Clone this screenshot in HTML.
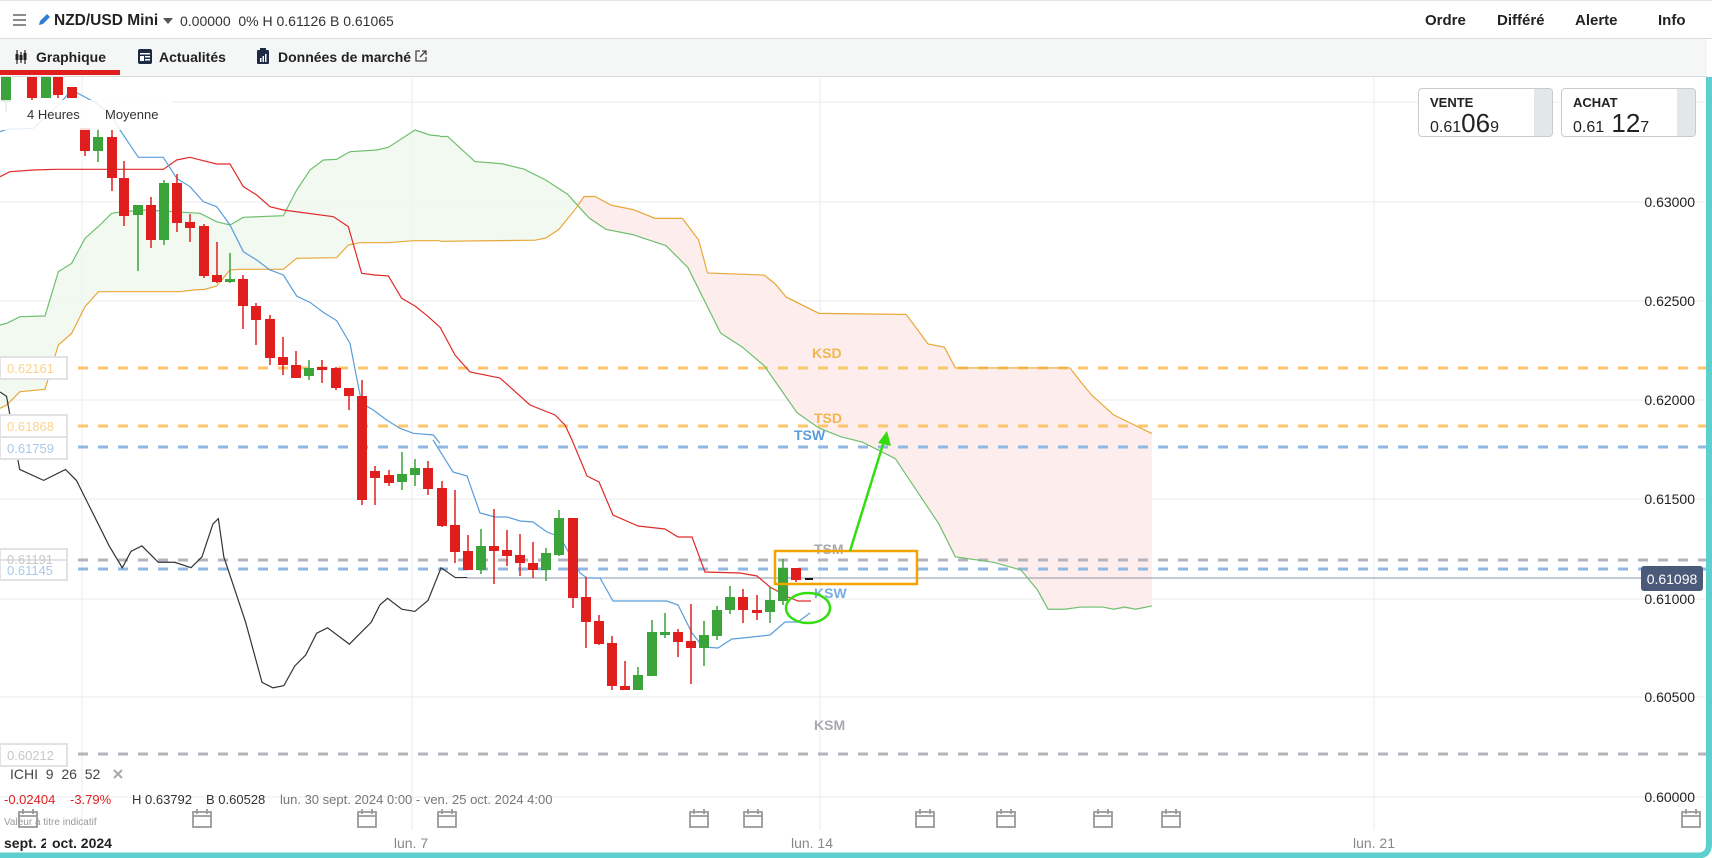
<!DOCTYPE html>
<html><head><meta charset="utf-8">
<style>
*{margin:0;padding:0;box-sizing:border-box}
body{width:1712px;height:858px;overflow:hidden;background:#fff;font-family:"Liberation Sans",sans-serif;position:relative}
.top{position:absolute;left:0;top:0;width:1712px;height:39px;background:#fff;border-bottom:1px solid #d8dcdc;border-top:1px solid #e4e6e6}
.tabs{position:absolute;left:0;top:39px;width:1707px;height:38px;background:#f5f6f6;border-bottom:1px solid #d8dcdc}
.t{position:absolute;white-space:nowrap}
</style></head><body>
<div class="top">
 <svg class="t" style="left:13px;top:12px" width="14" height="14"><path d="M0 2h13M0 7h13M0 12h13" stroke="#666" stroke-width="1.6"/></svg>
 <svg class="t" style="left:37px;top:12px" width="14" height="14"><path d="M2 12l1-4 7-7 3 3-7 7z" fill="#2f7fd8"/></svg>
 <div class="t" style="left:54px;top:11px;font-size:15.5px;font-weight:bold;color:#222">NZD/USD Mini</div>
 <svg class="t" style="left:163px;top:17px" width="10" height="6"><path d="M0 0h10L5 6z" fill="#555"/></svg>
 <div class="t" style="left:180px;top:12px;font-size:14px;color:#333">0.00000&nbsp; 0% H 0.61126 B 0.61065</div>
 <div class="t" style="left:1425px;top:11px;font-size:15px;font-weight:bold;color:#222">Ordre</div>
 <div class="t" style="left:1497px;top:11px;font-size:15px;font-weight:bold;color:#222">Différé</div>
 <div class="t" style="left:1575px;top:11px;font-size:15px;font-weight:bold;color:#222">Alerte</div>
 <div class="t" style="left:1658px;top:11px;font-size:15px;font-weight:bold;color:#222">Info</div>
</div>
<div class="tabs">
 <svg class="t" style="left:15px;top:11px" width="12" height="14"><path d="M2 0v14M6 2v11M10 0v14" stroke="#222" stroke-width="1.2"/><rect x="0.5" y="4" width="3" height="6" fill="#222"/><rect x="4.5" y="5" width="3" height="5" fill="#222"/><rect x="8.5" y="3" width="3" height="7" fill="#222"/></svg>
 <div class="t" style="left:36px;top:10px;font-size:14px;font-weight:bold;color:#222">Graphique</div>
 <div class="t" style="left:0;top:31px;width:120px;height:5px;background:#e01e1e"></div>
 <svg class="t" style="left:138px;top:10px" width="14" height="15"><rect width="14" height="15" rx="2" fill="#1d2a44"/><rect x="2" y="4" width="10" height="1.5" fill="#fff"/><rect x="2" y="7" width="4" height="5" fill="#fff"/><rect x="7" y="7" width="5" height="1.5" fill="#fff"/><rect x="7" y="10" width="5" height="1.5" fill="#fff"/></svg>
 <div class="t" style="left:159px;top:10px;font-size:14px;font-weight:bold;color:#222">Actualités</div>
 <svg class="t" style="left:257px;top:9px" width="12" height="16"><rect y="2" width="12" height="14" rx="1" fill="#1d2a44"/><rect x="3" y="0" width="6" height="4" fill="#1d2a44"/><rect x="3" y="10" width="1.5" height="4" fill="#fff"/><rect x="5.5" y="8" width="1.5" height="6" fill="#fff"/><rect x="8" y="6" width="1.5" height="8" fill="#fff"/></svg>
 <div class="t" style="left:278px;top:10px;font-size:14px;font-weight:bold;color:#222">Données de marché</div>
 <svg class="t" style="left:415px;top:11px" width="12" height="12"><path d="M5 1H1v10h10V7M7 1h4v4M11 1L5 7" fill="none" stroke="#444" stroke-width="1.3"/></svg>
</div>

<svg class="t" style="left:0;top:77px" width="1712" height="781" viewBox="0 77 1712 781">
<defs><g id="cal"><rect x="-9" y="812" width="18" height="15"/><path d="M-9 816H9M-5 809v5M5 809v5"/></g></defs>
<g stroke="#ebebeb" stroke-width="1">
<path d="M0 102H1705M0 202H1705M0 301H1705M0 400H1705M0 499H1705M0 599H1705M0 697H1705M0 797H1705"/>
<path d="M82 77V830M412 77V830M820 77V830M1374 77V830"/>
</g>
<g transform="translate(0,70) scale(0.33333)">
<polygon fill="#eef7ee" opacity="0.8" points="0,765 20,760 60,740 135,738 175,605 215,580 255,505 300,465 335,430 370,425 440,420 600,430 650,455 690,465 730,442 850,437 890,360 930,300 970,270 1010,268 1050,245 1130,240 1165,232 1245,180 1290,195 1320,198 1320,512 1240,512 1165,518 1080,518 1045,525 1010,563 890,565 850,598 720,598 690,600 650,648 615,658 580,660 540,665 295,665 255,710 215,790 175,825 135,958 60,965 20,1005 0,1015"/>
</g>
<g transform="scale(1.0918)">
<polygon fill="#eef7ee" opacity="0.8" points="403,125 410,125 435,148 460,150 480,155 500,165 520,178 528,187 512,210 500,218 490,220 403,221"/>
<polygon fill="#fdeaea" opacity="0.85" points="528,187 535,180 545,180 560,188 580,192 600,200 625,200 640,220 648,250 700,252 710,260 720,272 750,287 830,288 850,315 865,318 875,337 980,337 990,350 1000,362 1020,380 1055,397 1055,555 1040,558 1020,558 1010,556 990,556 975,558 960,558 950,540 935,522 910,515 875,510 860,480 840,450 820,420 790,405 770,400 750,392 730,378 700,335 680,318 660,305 650,285 640,265 630,245 610,225 580,215 555,210 540,200"/>
</g>
<g stroke-width="3" stroke-dasharray="10 10" fill="none">
<path d="M78 368H1707" stroke="#fcc66a"/>
<path d="M78 426H1707" stroke="#fcc66a"/>
<path d="M78 447H1707" stroke="#8fb8e2"/>
<path d="M78 560H1707" stroke="#b4b4bc"/>
<path d="M78 569H1707" stroke="#8fb8e2"/>
<path d="M78 754H1707" stroke="#b4b4bc"/>
</g>
<path d="M467 578H1641" stroke="#8a96a8" stroke-width="1"/>
<g transform="translate(0,70) scale(0.33333)" fill="none">
<polyline vector-effect="non-scaling-stroke" stroke-width="1.2" stroke="#6fbf6f" points="0,765 20,760 60,740 135,738 175,605 215,580 255,505 300,465 335,430 370,425 440,420 600,430 650,455 690,465 730,442 850,437 890,360 930,300 970,270 1010,268 1050,245 1130,240 1165,232 1245,180 1290,195 1320,198"/>
<polyline vector-effect="non-scaling-stroke" stroke-width="1.2" stroke="#e8a838" points="0,1015 20,1005 60,965 135,958 175,825 215,790 255,710 295,665 540,665 580,660 615,658 650,648 690,600 720,598 850,598 890,565 1010,563 1045,525 1080,518 1165,518 1240,512 1320,512"/>
<polyline vector-effect="non-scaling-stroke" stroke-width="1.2" stroke="#e02a2a" points="0,320 30,305 100,300 170,298 490,298 530,270 570,262 610,272 650,282 690,282 730,350 770,375 810,410 850,420 1000,440 1045,470 1085,610 1125,615 1165,618 1205,685 1245,708 1285,740 1320,772"/>
<polyline vector-effect="non-scaling-stroke" stroke-width="1.2" stroke="#5a9ddb" points="0,185 20,178 100,175 180,100 215,60 285,97 330,130 360,180 415,262 490,262 530,325 570,350 610,395 650,410 690,465 730,545 770,570 810,600 850,615 890,678 930,697 970,727 1010,752 1050,820 1085,1000 1120,1020 1160,1050 1200,1075 1240,1090 1300,1095 1320,1120"/>
</g>
<g transform="scale(1.0918)" fill="none">
<polyline vector-effect="non-scaling-stroke" stroke-width="1.2" stroke="#6fbf6f" points="403,125 410,125 435,148 460,150 480,155 500,165 520,178 528,187 540,200 555,210 580,215 610,225 630,245 640,265 650,285 660,305 680,318 700,335 730,378 750,392 770,400 790,405 820,420 840,450 860,480 875,510 910,515 935,522 950,540 960,558 975,558 990,556 1010,556 1020,558 1030,556 1040,558 1055,555"/>
<polyline vector-effect="non-scaling-stroke" stroke-width="1.2" stroke="#e8a838" points="403,221 490,220 500,218 512,210 525,194 528,190 535,180 545,180 560,188 580,192 600,200 625,200 640,220 648,250 700,252 710,260 720,272 750,287 830,288 850,315 865,318 875,337 980,337 990,350 1000,362 1020,380 1055,397"/>
<polyline vector-effect="non-scaling-stroke" stroke-width="1.2" stroke="#333" points="0,359 6,363 18,430 40,440 60,430 70,440 80,460 90,480 100,500 112,520 120,505 130,500 145,515 160,515 175,520 185,510 195,480 200,475 205,510 215,540 225,570 240,625 250,630 260,628 270,610 280,600 290,580 300,575 320,590 340,570 348,554 355,548 368,558 380,560 392,550 404,520 417,529 428,529"/>
</g>
<polyline fill="none" stroke="#e02a2a" stroke-width="1.2" points="440,327 455,355 470,372 500,378 530,405 555,415 565,425 572,440 587,476 599,482 613,515 638,526 665,529 678,537 692,537 705,572 740,573 757,576 770,587 788,597 798,601 811,601"/>
<polyline fill="none" stroke="#5a9ddb" stroke-width="1.2" points="433,440 453,472 467,476 480,513 495,517 507,517 520,521 533,522 547,532 560,537 573,560 580,573 587,578 600,578 613,601 667,601 678,605 692,633 703,647 718,648 732,639 743,638 770,635 785,622 798,622 810,613"/>
<g>
<g stroke-width="1.5">
<path stroke="#3aa33a" d="M6 77V112M46 77V98M98 128V162M138 205V271M164 180V245M230 253V283M309 360V380M402 452V490M415 459V486M481 529V574M546 548V581M559 510V556M638 667V690M652 620V676M665 613V638M704 621V666M717 606V640M730 586V614M770 587V623M783 559V605"/>
<path stroke="#e01e1e" d="M32 77V100M58 77V98M85 128V156M112 130V191M124 161V226M151 197V248M177 174V232M190 214V242M204 224V278M217 242V283M243 275V329M256 303V345M270 315V365M283 337V375M296 351V378M322 360V383M336 367V390M349 388V410M362 380V505M375 466V505M389 470V486M428 461V495M442 481V527M455 490V563M468 535V570M494 509V584M507 530V566M520 534V576M533 542V578M573 518V608M586 577V648M599 615V645M612 636V690M625 661V690M678 629V657M691 604V684M743 589V623M757 595V620M796 568V582"/>
</g>
<g fill="#3aa33a">
<rect x="1" y="77" width="10" height="25"/><rect x="41" y="77" width="10" height="21"/><rect x="93" y="137" width="10" height="14"/><rect x="133" y="205" width="10" height="10"/><rect x="159" y="183" width="10" height="57"/><rect x="225" y="279" width="10" height="3"/><rect x="304" y="368" width="10" height="8"/><rect x="397" y="474" width="10" height="8"/><rect x="410" y="468" width="10" height="7"/><rect x="476" y="546" width="10" height="24"/><rect x="541" y="553" width="10" height="17"/><rect x="554" y="518" width="10" height="37"/><rect x="633" y="675" width="10" height="15"/><rect x="647" y="632" width="10" height="44"/><rect x="660" y="632" width="10" height="3"/><rect x="699" y="635" width="10" height="13"/><rect x="712" y="610" width="10" height="26"/><rect x="725" y="597" width="10" height="13"/><rect x="765" y="600" width="10" height="12"/><rect x="778" y="568" width="10" height="33"/>
</g>
<g fill="#e01e1e">
<rect x="27" y="77" width="10" height="21"/><rect x="53" y="77" width="10" height="18"/><rect x="67" y="87" width="10" height="11"/><rect x="80" y="128" width="10" height="23"/><rect x="107" y="137" width="10" height="41"/><rect x="119" y="178" width="10" height="38"/><rect x="146" y="205" width="10" height="35"/><rect x="172" y="183" width="10" height="40"/><rect x="185" y="222" width="10" height="6"/><rect x="199" y="226" width="10" height="50"/><rect x="212" y="275" width="10" height="7"/><rect x="238" y="279" width="10" height="27"/><rect x="251" y="306" width="10" height="14"/><rect x="265" y="319" width="10" height="39"/><rect x="278" y="357" width="10" height="8"/><rect x="291" y="365" width="10" height="13"/><rect x="317" y="367" width="10" height="3"/><rect x="331" y="368" width="10" height="20"/><rect x="344" y="388" width="10" height="8"/><rect x="357" y="396" width="10" height="104"/><rect x="370" y="471" width="10" height="7"/><rect x="384" y="475" width="10" height="8"/><rect x="423" y="468" width="10" height="21"/><rect x="437" y="488" width="10" height="38"/><rect x="450" y="525" width="10" height="27"/><rect x="463" y="551" width="10" height="19"/><rect x="489" y="546" width="10" height="5"/><rect x="502" y="550" width="10" height="6"/><rect x="515" y="555" width="10" height="8"/><rect x="528" y="563" width="10" height="7"/><rect x="568" y="518" width="10" height="80"/><rect x="581" y="597" width="10" height="25"/><rect x="594" y="621" width="10" height="23"/><rect x="607" y="643" width="10" height="43"/><rect x="620" y="686" width="10" height="4"/><rect x="673" y="632" width="10" height="10"/><rect x="686" y="641" width="10" height="7"/><rect x="738" y="597" width="10" height="13"/><rect x="752" y="610" width="10" height="3"/><rect x="791" y="568" width="10" height="12"/>
</g>
<path d="M805 579H813" stroke="#111" stroke-width="2"/>
</g>
<rect x="0" y="100" width="172" height="30" fill="#fff" opacity="0.85"/>
<text x="27" y="119" font-size="13" fill="#333">4 Heures</text>
<text x="105" y="119" font-size="13" fill="#333">Moyenne</text>
<g font-size="14" font-weight="bold">
<text x="812" y="358" fill="#f3b54d">KSD</text>
<text x="814" y="423" fill="#f3b54d">TSD</text>
<text x="794" y="440" fill="#5a9ddb">TSW</text>
<text x="814" y="554" fill="#a8a8b0">TSM</text>
<text x="814" y="598" fill="#7aade0">KSW</text>
<text x="814" y="730" fill="#a8a8b0">KSM</text>
</g>
<rect x="775" y="551" width="142" height="33" fill="none" stroke="#f5a300" stroke-width="2.5"/>
<ellipse cx="808" cy="608" rx="22" ry="15" fill="none" stroke="#33dd11" stroke-width="2.5"/>
<path d="M850 551L885 438" stroke="#33dd11" stroke-width="2.5"/>
<path d="M887 431L878 443L891 446Z" fill="#33dd11"/>
<g stroke-width="2" fill="#fff">
<rect x="0" y="357" width="67" height="22" stroke="#e2e2e6"/>
<rect x="0" y="415" width="67" height="22" stroke="#e2e2e6"/>
<rect x="0" y="437" width="67" height="22" stroke="#e2e2e6"/>
<rect x="0" y="549" width="67" height="20" stroke="#e2e2e6"/>
<rect x="0" y="560" width="67" height="20" stroke="#e2e2e6"/>
<rect x="0" y="744" width="67" height="22" stroke="#e2e2e6"/>
</g>
<g font-size="13">
<text x="7" y="373" fill="#fbd28e">0.62161</text>
<text x="7" y="431" fill="#fbd28e">0.61868</text>
<text x="7" y="453" fill="#a9c8ea">0.61759</text>
<text x="7" y="564" fill="#c8c8cc">0.61191</text>
<text x="7" y="575" fill="#a9c8ea">0.61145</text>
<text x="7" y="760" fill="#c8c8cc">0.60212</text>
</g>
<g font-size="14" fill="#222" text-anchor="end">
<text x="1695" y="207">0.63000</text>
<text x="1695" y="306">0.62500</text>
<text x="1695" y="405">0.62000</text>
<text x="1695" y="504">0.61500</text>
<text x="1695" y="604">0.61000</text>
<text x="1695" y="702">0.60500</text>
<text x="1695" y="802">0.60000</text>
</g>
<rect x="1641" y="566" width="62" height="25" rx="3" fill="#4a5a78"/>
<text x="1672" y="584" font-size="14" fill="#fff" text-anchor="middle">0.61098</text>
<text x="10" y="779" font-size="14" fill="#444">ICHI&#160; 9&#160; 26&#160; 52</text>
<path d="M114 770l8 8M122 770l-8 8" stroke="#aaa" stroke-width="2"/>
<g font-size="13">
<text x="4" y="804" fill="#e02020">-0.02404</text>
<text x="70" y="804" fill="#e02020">-3.79%</text>
<text x="132" y="804" fill="#333">H 0.63792</text>
<text x="206" y="804" fill="#333">B 0.60528</text>
<text x="280" y="804" fill="#777">lun. 30 sept. 2024 0:00 - ven. 25 oct. 2024 4:00</text>
</g>
<text x="4" y="825" font-size="10" fill="#999">Valeur à titre indicatif</text>
<g fill="none" stroke="#999" stroke-width="1.8">
<use href="#cal" x="28"/><use href="#cal" x="202"/><use href="#cal" x="367"/><use href="#cal" x="447"/><use href="#cal" x="699"/><use href="#cal" x="753"/><use href="#cal" x="925"/><use href="#cal" x="1006"/><use href="#cal" x="1103"/><use href="#cal" x="1171"/><use href="#cal" x="1691"/>
</g>
<text x="4" y="848" font-size="14" font-weight="bold" fill="#222">sept. 2</text>
<rect x="46" y="834" width="8" height="18" fill="#fff"/>
<text x="52" y="848" font-size="14" font-weight="bold" fill="#222">oct. 2024</text>
<g font-size="14" fill="#888" text-anchor="middle">
<text x="411" y="848">lun. 7</text>
<text x="812" y="848">lun. 14</text>
<text x="1374" y="848">lun. 21</text>
</g>
<path d="M0 855.5H1698Q1709 855.5 1709 844V77" fill="none" stroke="#5ecfcf" stroke-width="6"/>
</svg>

<div class="t" style="left:1418px;top:88px;width:135px;height:49px;border:1px solid #c8cccc;border-radius:4px;background:#fff;overflow:hidden">
 <div style="position:absolute;right:0;top:0;width:18px;height:49px;background:#e0e8e8"></div>
 <div class="t" style="left:11px;top:6px;font-size:13px;font-weight:bold;color:#222">VENTE</div>
 <div class="t" style="left:11px;top:19px;color:#222"><span style="font-size:16px">0.61</span><span style="font-size:26px">06</span><span style="font-size:16px">9</span></div>
</div>
<div class="t" style="left:1561px;top:88px;width:135px;height:49px;border:1px solid #c8cccc;border-radius:4px;background:#fff;overflow:hidden">
 <div style="position:absolute;right:0;top:0;width:18px;height:49px;background:#e0e8e8"></div>
 <div class="t" style="left:11px;top:6px;font-size:13px;font-weight:bold;color:#222">ACHAT</div>
 <div class="t" style="left:11px;top:19px;color:#222"><span style="font-size:16px">0.61</span><span style="font-size:26px"> 12</span><span style="font-size:16px">7</span></div>
</div>
</body></html>
